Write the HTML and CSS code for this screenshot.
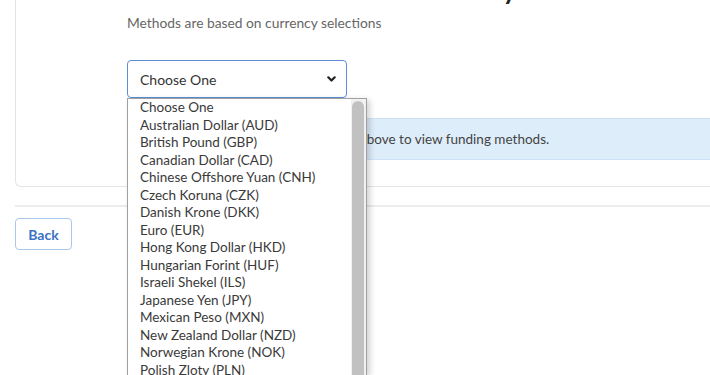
FILE: index.html
```html
<!DOCTYPE html>
<html lang="en">
<head>
    <meta charset="UTF-8">
    <meta name="viewport" content="width=device-width, initial-scale=1.0">
    <title>Funding Methods</title>
    <link rel="stylesheet" href="styles.css">
</head>
<body>

<div class="card">
    <h2 class="title">Select Methods for Your Currency</h2>
    <p class="subtitle">Methods are based on currency selections</p>

    <div class="select-wrap">
        <div class="select-box">
            <span>Choose One</span>
            <svg class="chevron" width="9" height="6" viewBox="0 0 9 6">
                <path d="M1.3 1.3 L4.5 4.5 L7.7 1.3" fill="none" stroke="#222" stroke-width="2.2" stroke-linecap="round" stroke-linejoin="round"/>
            </svg>
        </div>

        <div class="dropdown">
            <ul class="options">
                <li>Choose One</li>
                <li>Australian Dollar (AUD)</li>
                <li>British Pound (GBP)</li>
                <li>Canadian Dollar (CAD)</li>
                <li>Chinese Offshore Yuan (CNH)</li>
                <li>Czech Koruna (CZK)</li>
                <li>Danish Krone (DKK)</li>
                <li>Euro (EUR)</li>
                <li>Hong Kong Dollar (HKD)</li>
                <li>Hungarian Forint (HUF)</li>
                <li>Israeli Shekel (ILS)</li>
                <li>Japanese Yen (JPY)</li>
                <li>Mexican Peso (MXN)</li>
                <li>New Zealand Dollar (NZD)</li>
                <li>Norwegian Krone (NOK)</li>
                <li>Polish Zloty (PLN)</li>
            </ul>
            <div class="scrollbar">
                <div class="thumb"></div>
            </div>
        </div>
    </div>

    <div class="info">Select a currency from the dropdown above to view funding methods.</div>
</div>

<div class="divider"></div>

<button class="back-btn" type="button">Back</button>

</body>
</html>
```

FILE: styles.css
```css
html {
    height: 100%;
}
body {
    font-family: Lato, "Open Sans", sans-serif;
    margin: 0;
    padding: 0;
    display: flow-root;
    min-height: 100%;
    background: #fff;
    color: #333;
}
.card {
    margin-left: 15px;
    margin-top: -26px;
    padding: 0 0 26px 111px;
    border: 1px solid #e4e4e4;
    border-top: none;
    border-right: none;
    border-radius: 0 0 0 6px;
}
.title {
    font-size: 26px;
    font-weight: 700;
    color: #222;
    margin: 0;
    line-height: 32px;
    white-space: nowrap;
}
.subtitle {
    font-size: 13.8px;
    color: #666;
    margin: 8px 0 0;
    line-height: 18px;
}
.select-wrap {
    position: relative;
    width: 220px;
    margin-top: 28px;
}
.select-box {
    display: flex;
    align-items: center;
    justify-content: space-between;
    height: 38px;
    box-sizing: border-box;
    padding: 0 10px 0 12px;
    border: 1px solid #5b8ed6;
    border-radius: 4px;
    font-size: 14px;
    color: #333;
}
.dropdown {
    position: absolute;
    top: 100%;
    left: 0;
    width: 240px;
    height: 277px;
    box-sizing: border-box;
    display: flex;
    overflow: hidden;
    background: #fff;
    border: 1px solid #a0a0a0;
    border-bottom: none;
    box-shadow: 3px 2px 6px rgba(0, 0, 0, 0.18);
    z-index: 2;
}
.options {
    list-style: none;
    margin: 0;
    padding: 0;
    flex: 1;
}
.options li {
    padding-left: 12px;
    font-size: 13.5px;
    line-height: 17.5px;
    color: #3a3a3a;
    white-space: nowrap;
}
.scrollbar {
    width: 15px;
    background: #f1f1f1;
    padding-top: 2px;
    box-sizing: border-box;
}
.thumb {
    width: 12px;
    margin-left: 1px;
    height: 290px;
    background: #c1c1c1;
    border-radius: 6px 6px 0 0;
}
.info {
    margin-top: 20px;
    height: 42px;
    box-sizing: border-box;
    padding: 0 12px 0 9px;
    display: flex;
    align-items: center;
    background: #deedfa;
    border: 1px solid #cde2f5;
    border-right: none;
    font-size: 13.5px;
    color: #444;
}
.divider {
    margin: 18px 0 0 15px;
    height: 2px;
    background: #ececec;
}
.back-btn {
    margin: 11px 0 0 15px;
    width: 57px;
    height: 32px;
    background: #fff;
    border: 1px solid #a9c8ec;
    border-radius: 4px;
    color: #3b72c6;
    font-family: Lato, "Open Sans", sans-serif;
    font-size: 14px;
    font-weight: 700;
    cursor: pointer;
}
```
